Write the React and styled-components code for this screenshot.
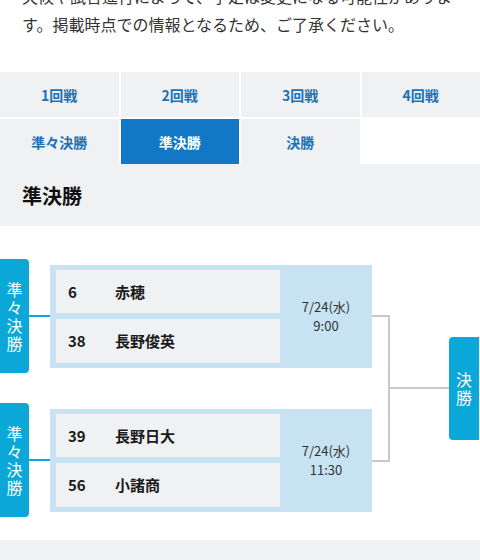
import React from "react";
import styled, { createGlobalStyle } from "styled-components";

const GlobalStyle = createGlobalStyle`
  body {
    margin: 0;
    background: #fff;
    font-family: "Noto Sans CJK JP", "Noto Sans", sans-serif;
    color: #222;
    overflow: hidden;
  }
`;

const Page = styled.div`
  width: 480px;
`;

const Notice = styled.p`
  margin: -18px 0 34px;
  padding: 0 22px;
  font-size: 16px;
  line-height: 28px;
  color: #333;
`;

const Tabs = styled.div`
  display: grid;
  grid-template-columns: repeat(4, 1fr);
  gap: 2px;
`;

const Tab = styled.div`
  height: 45px;
  display: flex;
  align-items: center;
  justify-content: center;
  font-size: 14px;
  font-weight: 700;
  color: ${(p) => (p.$active ? "#fff" : "#1b72b6")};
  background: ${(p) =>
    p.$active ? "#1277c4" : p.$empty ? "#fff" : "#eff1f3"};
`;

const SectionHead = styled.div`
  height: 62px;
  display: flex;
  align-items: center;
  padding: 0 22px;
  background: #eff1f3;
  font-size: 20px;
  font-weight: 700;
  color: #111;
`;

const Bracket = styled.div`
  display: flex;
  align-items: center;
  padding: 33px 0 23px;
`;

const Matches = styled.div`
  display: flex;
  flex-direction: column;
  gap: 30px;
`;

const MatchGroup = styled.div`
  display: flex;
  align-items: center;
`;

const RoundLabel = styled.div`
  width: ${(p) => p.$w}px;
  height: ${(p) => p.$h}px;
  background: #0ba7d9;
  color: #fff;
  display: flex;
  flex-direction: column;
  align-items: center;
  justify-content: center;
  gap: 1px;
  font-size: 16px;
  line-height: 17px;
  border-radius: ${(p) => (p.$side === "left" ? "0 4px 4px 0" : "4px 0 0 4px")};
`;

const Stub = styled.div`
  width: ${(p) => p.$w}px;
  height: 2px;
  background: ${(p) => p.$color};
`;

const MatchBox = styled.div`
  width: 322px;
  height: 103px;
  box-sizing: border-box;
  padding: 5px 0 5px 6px;
  background: #c7e3f3;
  display: flex;
`;

const Teams = styled.div`
  width: 224px;
  display: flex;
  flex-direction: column;
  gap: 6px;
`;

const TeamRow = styled.div`
  flex: 1;
  display: flex;
  align-items: center;
  padding-left: 12px;
  background: #eff1f3;
  font-size: 15px;
  font-weight: 700;
  color: #1a1a1a;
`;

const Seed = styled.span`
  width: 47px;
`;

const When = styled.div`
  flex: 1;
  display: flex;
  flex-direction: column;
  align-items: center;
  justify-content: center;
  font-size: 13px;
  line-height: 19px;
  color: #333;
`;

const Elbow = styled.div`
  width: 16px;
  height: 143px;
  border: 2px solid #c9c9c9;
  border-left: none;
`;

const Footer = styled.div`
  height: 40px;
  background: #eff1f3;
`;

const matches = [
  { teams: [["6", "赤穂"], ["38", "長野俊英"]], date: "7/24(水)", time: "9:00" },
  { teams: [["39", "長野日大"], ["56", "小諸商"]], date: "7/24(水)", time: "11:30" },
];

const Stack = ({ text }) =>
  text.split("").map((c, i) => <span key={i}>{c}</span>);

export default function App() {
  return (
    <Page>
      <GlobalStyle />
      <Notice>
        天候や試合進行によって、予定は変更になる可能性があります。掲載時点での情報となるため、ご了承ください。
      </Notice>
      <Tabs>
        <Tab>1回戦</Tab>
        <Tab>2回戦</Tab>
        <Tab>3回戦</Tab>
        <Tab>4回戦</Tab>
        <Tab>準々決勝</Tab>
        <Tab $active>準決勝</Tab>
        <Tab>決勝</Tab>
        <Tab $empty />
      </Tabs>
      <SectionHead>準決勝</SectionHead>
      <Bracket>
        <Matches>
          {matches.map((m, i) => (
            <MatchGroup key={i}>
              <RoundLabel $side="left" $w={29} $h={114}>
                <Stack text="準々決勝" />
              </RoundLabel>
              <Stub $w={21} $color="#0ba7d9" />
              <MatchBox>
                <Teams>
                  {m.teams.map(([seed, name]) => (
                    <TeamRow key={seed}>
                      <Seed>{seed}</Seed>
                      {name}
                    </TeamRow>
                  ))}
                </Teams>
                <When>
                  <span>{m.date}</span>
                  <span>{m.time}</span>
                </When>
              </MatchBox>
            </MatchGroup>
          ))}
        </Matches>
        <Elbow />
        <Stub $w={59} $color="#c9c9c9" />
        <RoundLabel $side="right" $w={30} $h={103}>
          <Stack text="決勝" />
        </RoundLabel>
      </Bracket>
      <Footer />
    </Page>
  );
}
